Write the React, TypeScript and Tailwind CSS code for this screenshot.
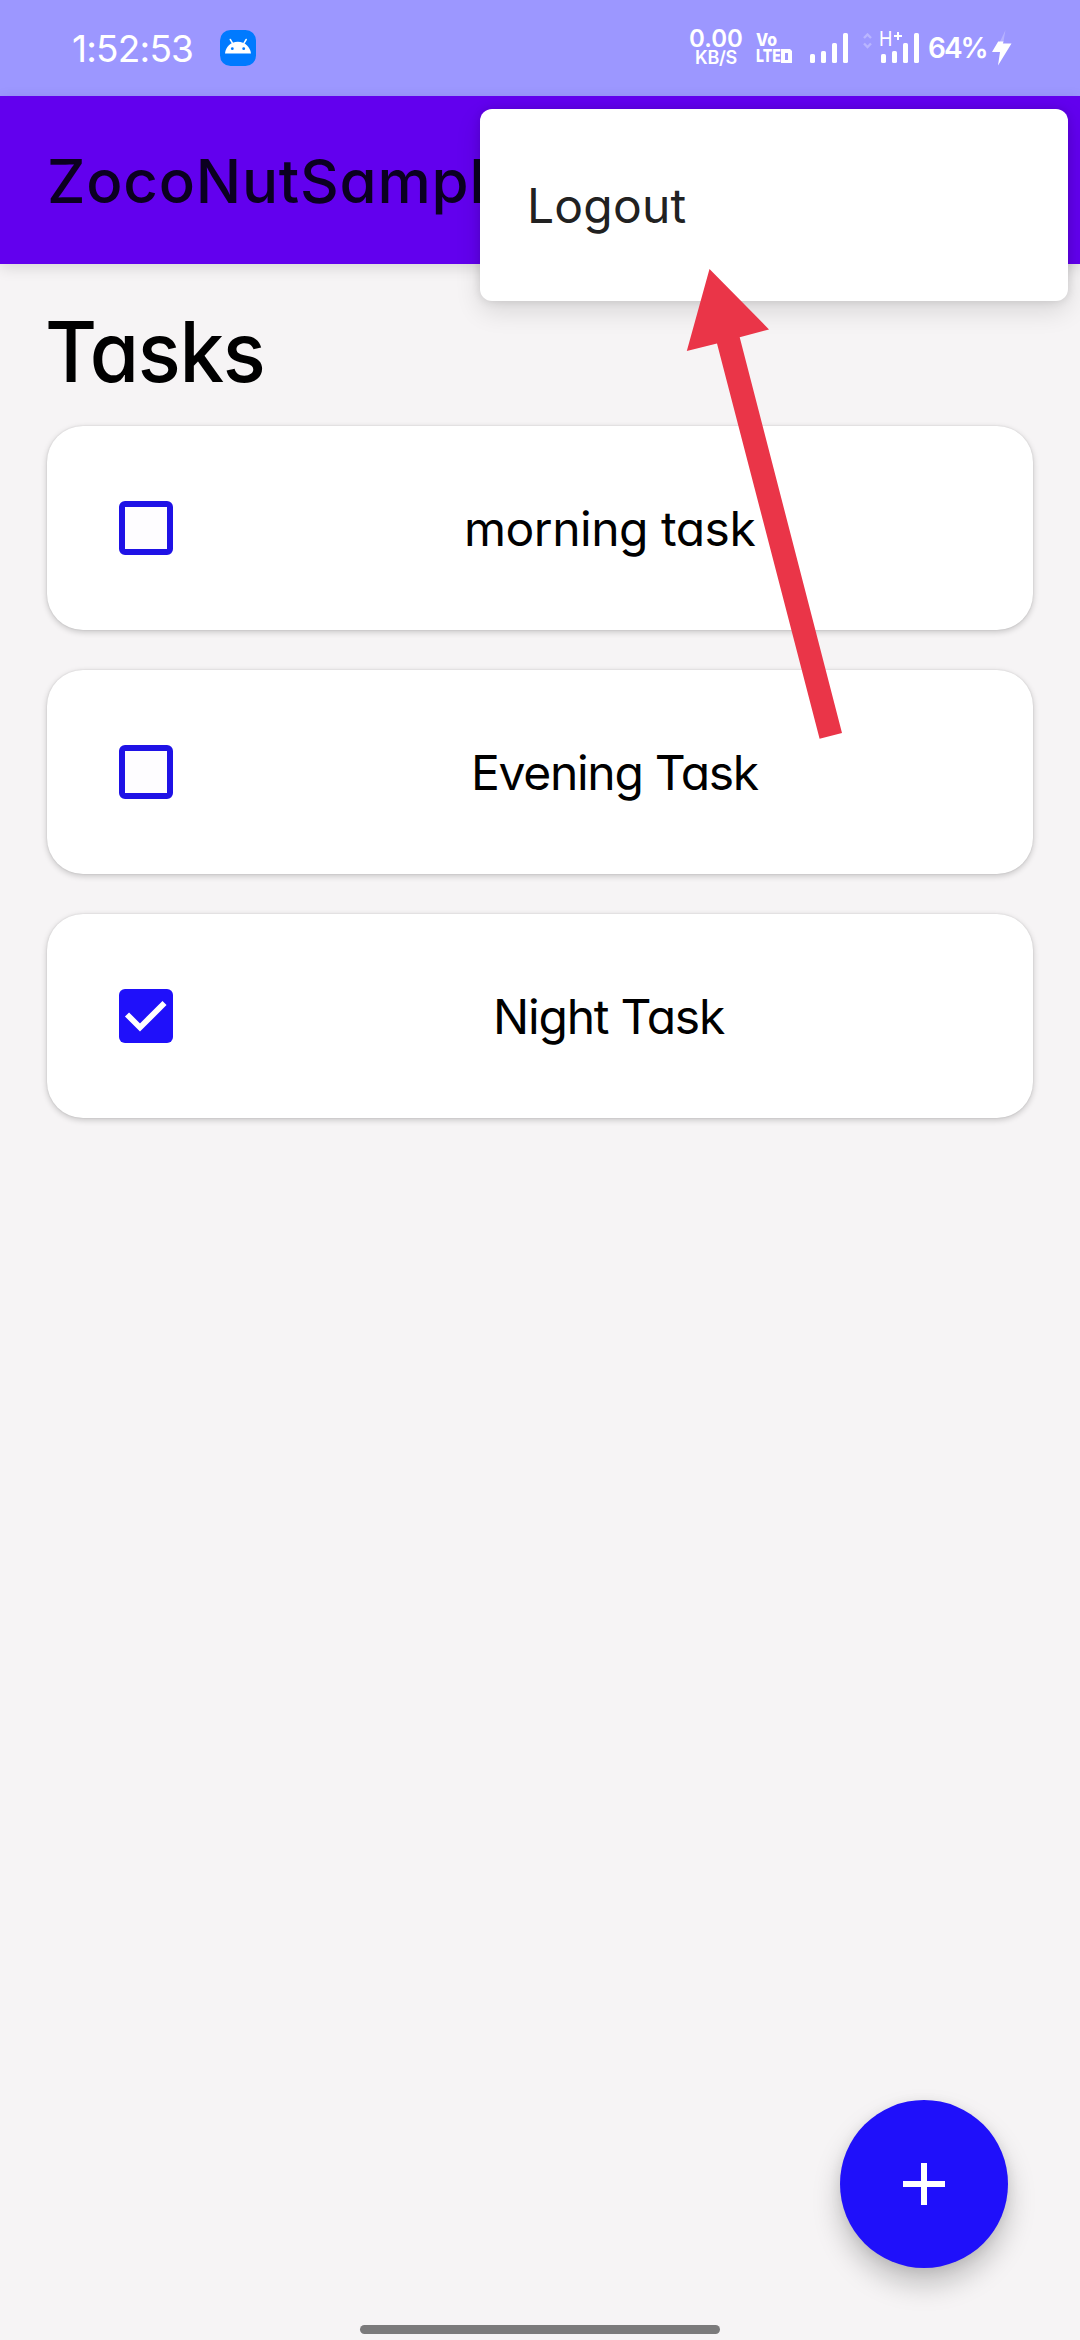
type Task = { title: string; done: boolean; textClass: string };

const tasks: Task[] = [
  { title: 'morning task', done: false, textClass: 'ml-[291px] tracking-[-0.5px]' },
  { title: 'Evening Task', done: false, textClass: 'ml-[298px] tracking-[-1.3px]' },
  { title: 'Night Task', done: true, textClass: 'ml-[320px] tracking-[-1.2px]' },
];

function AndroidIcon() {
  return (
    <svg viewBox="0 0 36 36" className="ml-[28px] size-9 shrink-0">
      <rect width="36" height="36" rx="10.5" fill="#007aff" />
      <path d="M5 23.5C5.6 17 10.500 11.800 17.800 11.800S30.200 17 31 23.500Z" fill="#fff" />
      <path d="m10.300 9.500 2.600 4.300M26.200 9.500l-2.600 4.300" stroke="#fff" strokeWidth="1.500" strokeLinecap="round" />
      <circle cx="12.300" cy="18.700" r="1.400" fill="#007aff" />
      <circle cx="23.700" cy="18.700" r="1.400" fill="#007aff" />
    </svg>
  );
}

function SignalBars({ className }: { className: string }) {
  return (
    <svg viewBox="0 0 39 30" className={className} fill="#fff">
      <rect x="0" y="21" width="5" height="9" rx="1.600" />
      <rect x="11" y="18" width="5" height="12" rx="1.600" />
      <rect x="22" y="10" width="5" height="20" rx="1.600" />
      <rect x="33" y="0" width="5" height="30" rx="1.600" />
    </svg>
  );
}

function StatusBar() {
  return (
    <div className="flex h-24 items-center bg-[#9c97ff] text-white">
      <span className="ml-[72px] w-[120px] text-[37px] leading-none tracking-[-0.8px] whitespace-nowrap">1:52:53</span>
      <AndroidIcon />
      <div className="ml-[432px] flex w-[56px] flex-col items-center font-semibold">
        <span className="text-[24px] leading-[20px]">0.00</span>
        <span className="text-[18px] leading-[18px] tracking-[-0.3px]">KB/S</span>
      </div>
      <div className="ml-[12px] flex w-[36px] flex-col font-extrabold">
        <span className="origin-left scale-x-[0.88] text-[18px] leading-4">Vo</span>
        <div className="flex h-4 items-center">
          <span className="w-[25px] origin-left scale-x-[0.78] text-[18px] leading-4">LTE</span>
          <svg viewBox="0 0 11 14" className="h-[14px] w-[11px] shrink-0">
            <path d="M0 0H9L11 2V14H0ZM4 4V11H7V4Z" fill="#fff" fillRule="evenodd" />
          </svg>
        </div>
      </div>
      <SignalBars className="ml-[18px] h-[30px] w-[39px] shrink-0" />
      <svg viewBox="0 0 9 16" className="mb-[14px] ml-[14px] h-4 w-[9px] shrink-0">
        <path d="m1 5 3.500-3.500L8 5M1 10.500 4.500 14 8 10.500" stroke="#b9b5ff" strokeWidth="2.400" fill="none" />
      </svg>
      <div className="relative ml-[9px] h-[30px] w-[39px] shrink-0">
        <SignalBars className="h-[30px] w-[39px]" />
        <span className="absolute -top-[2px] -left-[2.500px] origin-left scale-x-90 text-[20px] leading-4">H</span>
        <svg viewBox="0 0 8 8" className="absolute -top-px left-[13px] size-2">
          <path d="M4 0V8M0 4H8" stroke="#fff" strokeWidth="2" />
        </svg>
      </div>
      <span className="ml-[8px] w-[59px] text-[28px] leading-none font-semibold tracking-[-2px] whitespace-nowrap">64%</span>
      <svg viewBox="0 0 20 36" className="ml-[5px] h-9 w-5 shrink-0">
        <path d="M13.500 0 4 20H10Z" fill="#b5b1ff" />
        <path d="M6.200 11.500H11.500L10.800 13.500H19.500L6 35.500 8 22H0Z" fill="#fff" />
      </svg>
    </div>
  );
}

function Checkbox({ checked }: { checked: boolean }) {
  return checked ? (
    <span className="flex size-[54px] shrink-0 items-center justify-center rounded-[6px] bg-[#1f10fa]">
      <svg viewBox="0 0 54 54" className="size-[54px]">
        <path d="M8 25.500 21 38.500 45.500 14" stroke="#fff" strokeWidth="5.800" fill="none" />
      </svg>
    </span>
  ) : (
    <span className="size-[54px] shrink-0 rounded-[6px] border-[6px] border-[#1f12e6] bg-[#fefdff]" />
  );
}

export default function App() {
  return (
    <div className="relative flex h-[2340px] w-[1080px] flex-col overflow-hidden bg-[#f6f4f5] font-['Inter',sans-serif] [font-feature-settings:'cv11']">
      <StatusBar />
      <header className="relative flex h-[168px] items-center bg-[#6200ee] pt-[2px] pl-[47px] shadow-[0_4px_14px_rgba(0,0,0,0.12)]">
        <h1 className="text-[60px] leading-none font-[540] tracking-[0.8px] text-[#0b0020]">ZocoNutSample</h1>
        <div className="absolute top-[13px] right-3 z-10 flex h-[192px] w-[588px] items-center rounded-[12px] bg-white pt-px pl-[47px] shadow-[0_10px_26px_rgba(0,0,0,0.12),0_0_10px_rgba(0,0,0,0.12)]">
          <span className="text-[48px] leading-none tracking-[0.2px] text-[#212121]">Logout</span>
        </div>
      </header>
      <main className="flex flex-1 flex-col px-[47px]">
        <h2 className="-ml-[2px] h-[162px] origin-left scale-x-[0.95] pt-[7px] text-[84px] leading-[162px] font-[550] tracking-[-1.300px] text-black">
          Tasks
        </h2>
        <ul className="flex flex-col gap-10">
          {tasks.map((task) => (
            <li
              key={task.title}
              className="flex h-[204px] items-center rounded-[36px] bg-white pl-[72px] shadow-[0_2px_6px_rgba(0,0,0,0.2),0_0_2px_rgba(0,0,0,0.12)]"
            >
              <Checkbox checked={task.done} />
              <span className={`pt-px text-[48px] leading-none whitespace-nowrap text-black ${task.textClass}`}>{task.title}</span>
            </li>
          ))}
        </ul>
      </main>
      <footer className="flex flex-col items-center">
        <button className="mr-[72px] mb-[57px] flex size-[168px] items-center justify-center self-end rounded-full bg-[#1f10fa] shadow-[0_16px_28px_rgba(0,0,0,0.22),0_2px_12px_rgba(0,0,0,0.08)]">
          <svg viewBox="0 0 42 42" className="size-[42px]">
            <path d="M21 0V42M0 21H42" stroke="#fff" strokeWidth="6" />
          </svg>
        </button>
        <div className="mb-[6px] h-[9px] w-[360px] rounded-full bg-[#7b7a7b]" />
      </footer>
      <svg viewBox="680 260 170 490" className="pointer-events-none absolute top-[260px] left-[680px] z-20 h-[490px] w-[170px]">
        <path d="M709.500 269 769 329.400 739.700 337.300 842 733 819.600 738.700 717 343.500 686.800 350.900Z" fill="#ea3548" />
      </svg>
    </div>
  );
}
